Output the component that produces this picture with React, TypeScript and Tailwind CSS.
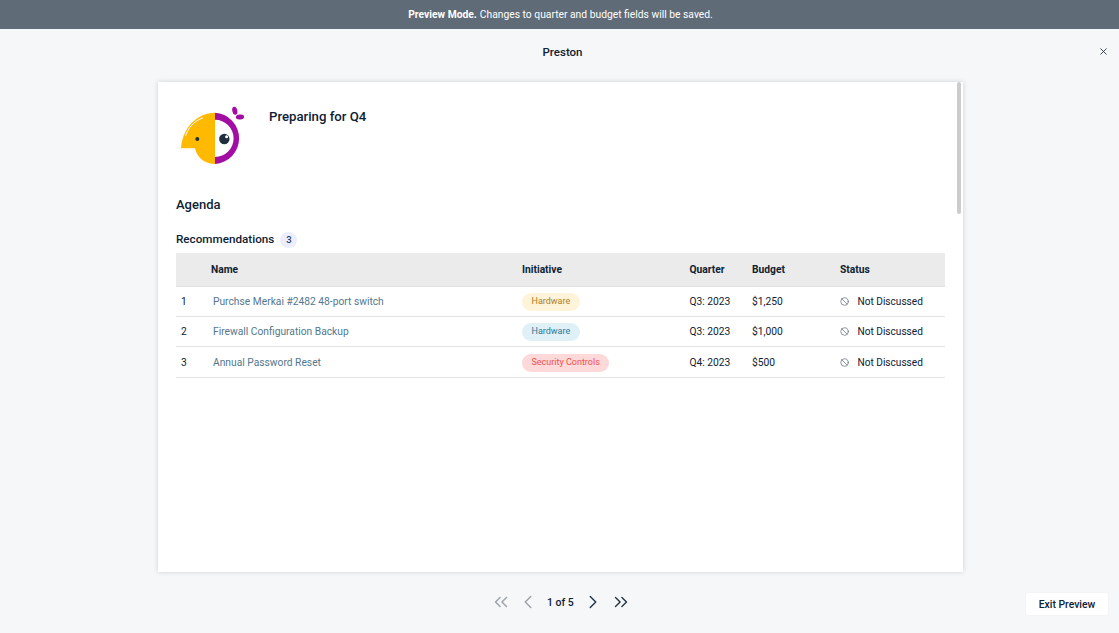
import { X, ChevronLeft, ChevronRight, ChevronsLeft, ChevronsRight, Ban } from 'lucide-react'

const rows = [
  { n: 1, name: 'Purchse Merkai #2482 48-port switch', tag: 'Hardware', tagClass: 'bg-[#fff3d9] text-[#b07e1f]', quarter: 'Q3: 2023', budget: '$1,250', h: 'h-[30px]', pad: 'pt-[1px]' },
  { n: 2, name: 'Firewall Configuration Backup', tag: 'Hardware', tagClass: 'bg-[#dff0f7] text-[#2f7896]', quarter: 'Q3: 2023', budget: '$1,000', h: 'h-[30px]', pad: 'pt-[1px]' },
  { n: 3, name: 'Annual Password Reset', tag: 'Security Controls', tagClass: 'bg-[#fdd9d9] text-[#f04f4f]', quarter: 'Q4: 2023', budget: '$500', h: 'h-[31px]', pad: 'pt-[2px]' },
]

function Logo() {
  return (
    <svg width="66" height="60" viewBox="0 0 66 60" className="block">
      {/* origin sits at page (180, 106) */}
      <path d="M35 6.7 C18 7 3 20 1 42.3 L15 42.3 C17 52 25 58 35 58 Z" fill="#ffba00" />
      <path d="M5.5 30 C8 22 14 15 23 11.8" fill="none" stroke="#fff" strokeWidth="1" />
      <path d="M35 6.7 A25.7 25.7 0 0 1 35 58 L35 51 A18.6 18.6 0 0 0 35 13.8 Z" fill="#a20ea4" />
      <circle cx="17.3" cy="33" r="2" fill="#1f2d3d" />
      <circle cx="44.3" cy="33" r="5.2" fill="#1f2d3d" />
      <circle cx="46.6" cy="30.8" r="1.5" fill="#fff" />
      <ellipse cx="54.8" cy="4.7" rx="2.5" ry="4.1" transform="rotate(-12 54.8 4.7)" fill="#a20ea4" />
      <ellipse cx="60" cy="11" rx="4.1" ry="2.5" transform="rotate(-4 60 11)" fill="#a20ea4" />
    </svg>
  )
}

export default function App() {
  return (
    <div className="h-[633px] w-[1119px] overflow-hidden bg-[#f5f7f9] text-[#0e2233] font-['Roboto',sans-serif] flex flex-col">
      <div className="h-[29px] shrink-0 bg-[#5f6b77] pl-[2px] text-white text-[10.3px] flex items-center justify-center">
        <span className="font-bold mr-[3px]">Preview Mode.</span> Changes to quarter and budget fields will be saved.
      </div>

      <div className="relative h-[53px] shrink-0 flex justify-center pl-[6px] pt-[15px]">
        <span className="text-[11.5px] font-medium leading-[17px]">Preston</span>
        <button className="absolute right-[10px] top-[17px] text-[#2b3a48]">
          <X size={11} strokeWidth={2} />
        </button>
      </div>

      <div className="relative ml-[158px] h-[490px] w-[805px] shrink-0 bg-white shadow-[0_0_5px_rgba(0,0,0,0.16)] px-[18px]">
        <div className="absolute right-[2px] top-0 h-[132px] w-[4px] rounded-full bg-[#cccccc]" />

        <div className="flex h-[93px] pt-[24px]">
          <div className="ml-[4px] mr-[23px] w-[66px]"><Logo /></div>
          <h1 className="mt-[2px] text-[13.2px] font-medium leading-[17px]">Preparing for Q4</h1>
        </div>

        <h2 className="mt-[21px] text-[13px] font-medium leading-[18px]">Agenda</h2>

        <div className="mt-[17px] flex h-[18px] items-center">
          <span className="text-[11.7px] font-medium">Recommendations</span>
          <span className="ml-[6px] flex h-[16px] w-[17px] items-center justify-center rounded-full bg-[#eceffb] text-[9.5px] font-medium text-[#2d3f66]">3</span>
        </div>

        <table className="mt-[4px] w-[769px] table-fixed border-collapse text-[10.25px]">
          <thead>
            <tr className="h-[33px] bg-[#ebebeb] border-b border-[#e2e2e2] text-left">
              <th className="w-[35px]"></th>
              <th className="w-[311px] font-bold">Name</th>
              <th className="w-[167.5px] font-bold">Initiative</th>
              <th className="w-[62.5px] font-bold">Quarter</th>
              <th className="w-[88px] font-bold">Budget</th>
              <th className="font-bold">Status</th>
            </tr>
          </thead>
          <tbody>
            {rows.map(r => (
              <tr key={r.n} className={`${r.h} border-b border-[#e4e4e4]`}>
                <td className={`pl-[5px] ${r.pad}`}>{r.n}</td>
                <td className={`pl-[2px] text-[#53788e] ${r.pad}`}>{r.name}</td>
                <td className={r.pad}>
                  <span className={`inline-flex h-[18px] items-center rounded-full px-[9.5px] text-[9px] ${r.tagClass}`}>{r.tag}</span>
                </td>
                <td className={r.pad}>{r.quarter}</td>
                <td className={r.pad}>{r.budget}</td>
                <td className={r.pad}>
                  <div className="flex items-center">
                    <Ban size={9} strokeWidth={1.75} className="text-[#555f68]" />
                    <span className="ml-[8.5px] text-[10.1px]">Not Discussed</span>
                  </div>
                </td>
              </tr>
            ))}
          </tbody>
        </table>
      </div>

      <div className="relative flex-1">
        <div className="flex h-[60px] items-center pl-[490px]">
          <ChevronsLeft size={22} strokeWidth={1.5} className="text-[#9aa1a8]" />
          <ChevronLeft size={22} strokeWidth={1.5} className="ml-[5px] text-[#9aa1a8]" />
          <span className="mx-[8px] w-[27px] whitespace-nowrap pt-[1px] text-[10.5px] font-medium">1 of 5</span>
          <ChevronRight size={22} strokeWidth={1.5} className="text-[#1f3344]" />
          <ChevronsRight size={22} strokeWidth={1.5} className="ml-[6px] text-[#1f3344]" />
        </div>
        <button className="absolute left-[1026px] top-[21px] h-[22px] w-[82px] rounded-[3px] bg-white pt-[1px] text-[10.4px] font-medium shadow-[0_0_2px_rgba(0,0,0,0.05)]">
          Exit Preview
        </button>
      </div>
    </div>
  )
}
